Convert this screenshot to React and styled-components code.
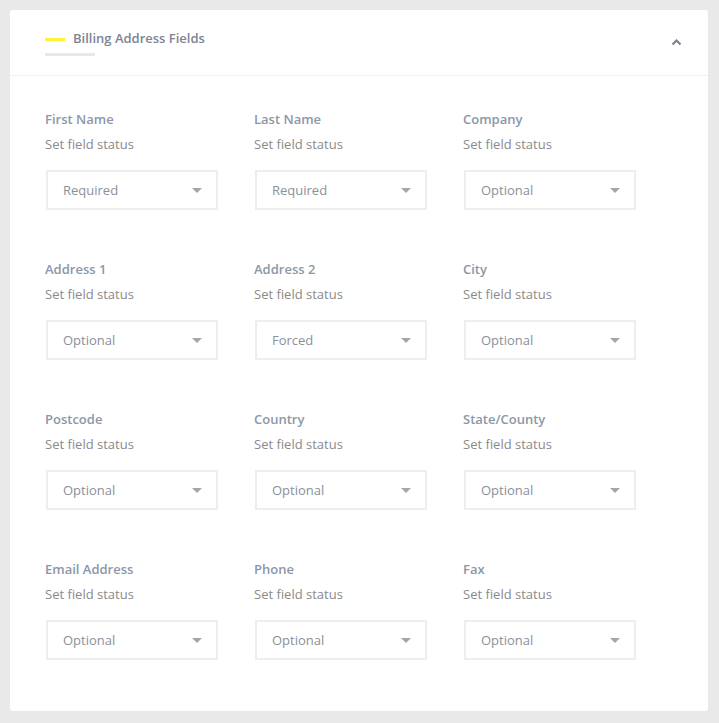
import styled, { createGlobalStyle } from 'styled-components'

const GlobalStyle = createGlobalStyle`
  html, body {
    margin: 0;
    padding: 0;
    background-color: #e9e9e9;
    font-family: "Open Sans", "Liberation Sans", sans-serif;
  }
`

const fields = [
  { label: 'First Name', value: 'Required' },
  { label: 'Last Name', value: 'Required' },
  { label: 'Company', value: 'Optional' },
  { label: 'Address 1', value: 'Optional' },
  { label: 'Address 2', value: 'Forced' },
  { label: 'City', value: 'Optional' },
  { label: 'Postcode', value: 'Optional' },
  { label: 'Country', value: 'Optional' },
  { label: 'State/County', value: 'Optional' },
  { label: 'Email Address', value: 'Optional' },
  { label: 'Phone', value: 'Optional' },
  { label: 'Fax', value: 'Optional' },
]

const Page = styled.div`
  padding: 10px 11px 12px 10px;
`

const Card = styled.div`
  background-color: #ffffff;
  border-radius: 3px;
  overflow: hidden;
`

const Header = styled.div`
  height: 65px;
  border-bottom: 1px solid #f1f1f1;
  display: flex;
  align-items: flex-start;
  justify-content: space-between;
  padding: 0 26px 0 35px;
`

const TitleBlock = styled.div`
  padding-top: 19px;
`

const Title = styled.h2`
  margin: 0;
  display: flex;
  align-items: center;
  gap: 8px;
  font-size: 13px;
  font-weight: 600;
  color: #7c8494;
  line-height: 18px;

  &::before {
    content: '';
    width: 20px;
    height: 3px;
    background-color: #fff23a;
    margin-top: 3px;
  }
`

const Underline = styled.div`
  width: 50px;
  height: 3px;
  background-color: #e8e8e8;
  margin-top: 6px;
`

const Toggle = styled.button`
  border: 0;
  background: transparent;
  padding: 0;
  margin-top: 26px;
  width: 11px;
  height: 12px;
  cursor: pointer;
  display: flex;
  align-items: center;
  justify-content: center;
`

const Body = styled.div`
  display: grid;
  grid-template-columns: repeat(3, 209px);
  row-gap: 50px;
  padding: 34px 0 51px 35px;
`

const Field = styled.div`
  display: flex;
  flex-direction: column;
`

const Label = styled.div`
  font-size: 13px;
  font-weight: 600;
  color: #8b97a8;
  line-height: 18px;
`

const Hint = styled.div`
  font-size: 13px;
  color: #8a8a8a;
  line-height: 18px;
  margin-top: 7px;
`

const Select = styled.div`
  margin: 17px 0 0 1px;
  width: 172px;
  height: 40px;
  box-sizing: border-box;
  border: 2px solid #eeeeee;
  display: flex;
  align-items: center;
  justify-content: space-between;
  padding: 0 14px 0 15px;
  font-size: 13px;
  color: #8a909a;
`

const Caret = styled.span`
  width: 0;
  height: 0;
  border-left: 5px solid transparent;
  border-right: 5px solid transparent;
  border-top: 5px solid #a5a5a5;
  margin-top: 1px;
`

export default function App() {
  return (
    <Page>
      <GlobalStyle />
      <Card>
        <Header>
          <TitleBlock>
            <Title>Billing Address Fields</Title>
            <Underline />
          </TitleBlock>
          <Toggle aria-label="Collapse">
            <svg width="11" height="7" viewBox="0 0 11 7">
              <path d="M1.5 5.5 L5.5 1.5 L9.5 5.5" fill="none" stroke="#7c8494" strokeWidth="2.2" />
            </svg>
          </Toggle>
        </Header>
        <Body>
          {fields.map((f) => (
            <Field key={f.label}>
              <Label>{f.label}</Label>
              <Hint>Set field status</Hint>
              <Select>
                {f.value}
                <Caret />
              </Select>
            </Field>
          ))}
        </Body>
      </Card>
    </Page>
  )
}
